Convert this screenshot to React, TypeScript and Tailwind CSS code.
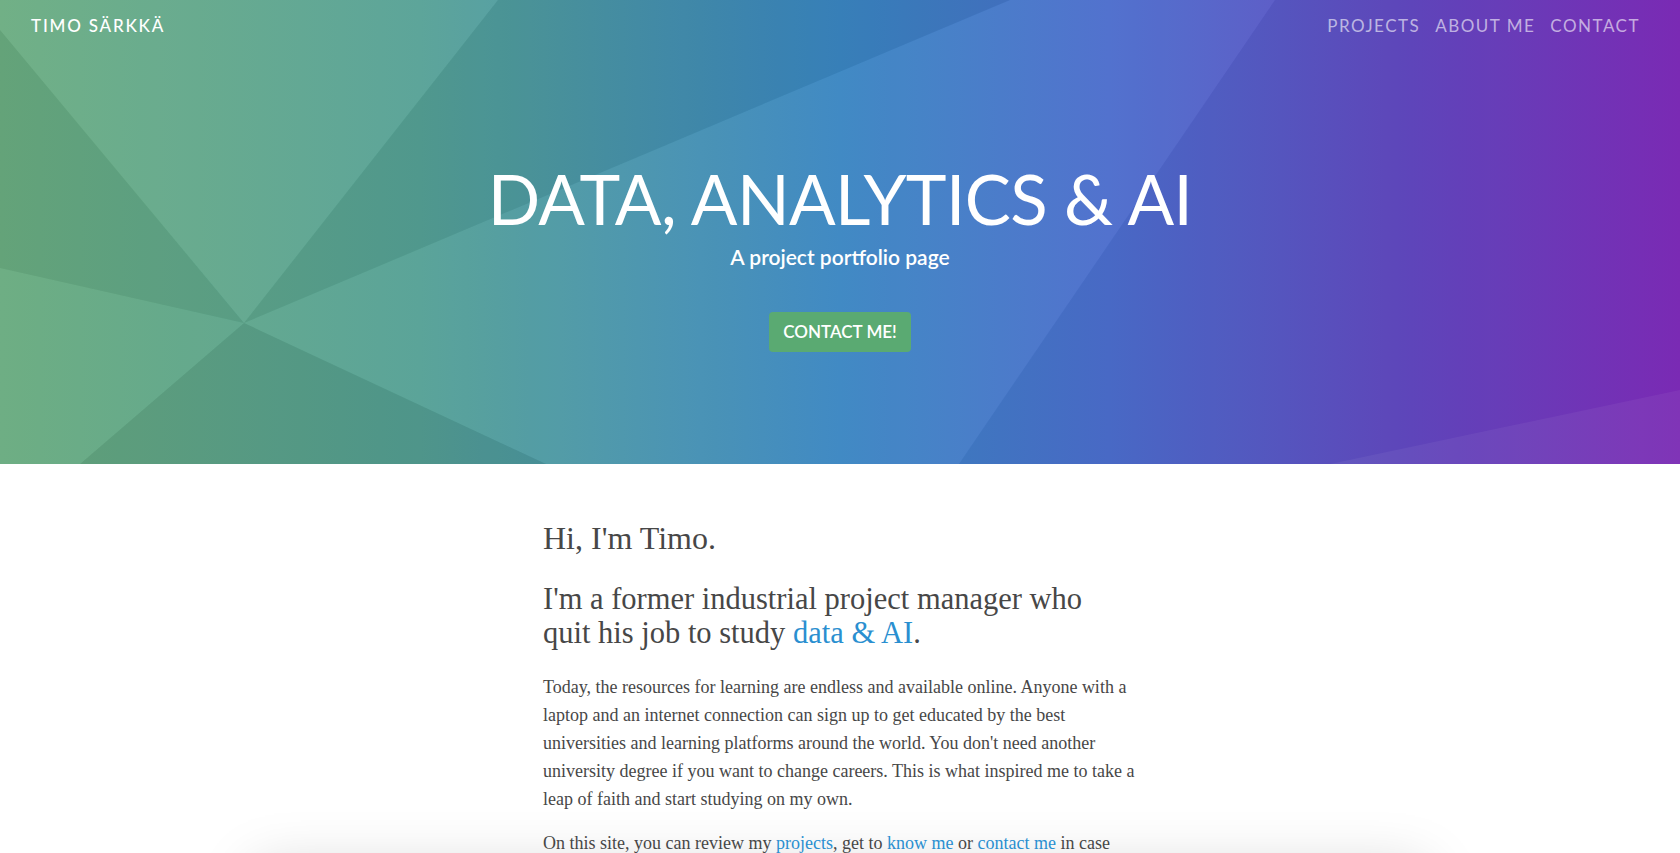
import React from "react";

const Facets = () => (
    <svg className="absolute inset-0 h-full w-full" viewBox="0 0 1680 464" preserveAspectRatio="none">
        {/* wedges around the focal point on the left */}
        <polygon points="0,30 244,323 0,268" fill="#000" fillOpacity="0.05" />
        <polygon points="0,0 498,0 244,323 0,30" fill="#fff" fillOpacity="0.05" />
        <polygon points="498,0 1010,0 244,323" fill="#000" fillOpacity="0.05" />
        <polygon points="244,323 1010,0 1275,0 959,464 546,464" fill="#fff" fillOpacity="0.04" />
        <polygon points="244,323 546,464 80,464" fill="#000" fillOpacity="0.07" />
        <polygon points="0,268 244,323 80,464 0,464" fill="#fff" fillOpacity="0.03" />
        <polygon points="1275,0 1680,0 1680,464 959,464" fill="#000" fillOpacity="0.03" />
        <polygon points="1330,464 1680,390 1680,464" fill="#fff" fillOpacity="0.05" />
    </svg>
);

const Hero = () => {
    return (
        <header className="relative h-[464px] overflow-hidden bg-[linear-gradient(90deg,#6aac80_0%,#55a195_25%,#3a86c2_50%,#4b6dcc_66%,#6248c0_84%,#7e2cba_100%)] font-['Lato',sans-serif] text-white">
            <Facets />

            {/* Nav */}
            <nav className="relative flex items-center justify-between pl-[31px] pr-[40px] pt-[13px]">
                <a href="#" className="text-[17px] font-medium tracking-[1.8px]">TIMO SÄRKKÄ</a>
                <div className="flex gap-[15px] text-[17px] tracking-[1.5px] text-white/60">
                    <a href="#">PROJECTS</a>
                    <a href="#">ABOUT ME</a>
                    <a href="#">CONTACT</a>
                </div>
            </nav>

            {/* Title */}
            <div className="relative flex flex-col items-center pt-[122px]">
                <h1 className="text-[69px] leading-[76px] font-normal tracking-[-0.6px]">DATA, ANALYTICS &amp; AI</h1>
                <p className="mt-[4px] text-[21px] font-semibold">A project portfolio page</p>
                <a href="#" className="mt-[40px] flex h-[40px] w-[142px] items-center justify-center rounded-[4px] bg-[#5aaa72] text-[17px] font-semibold">
                    CONTACT ME!
                </a>
            </div>
        </header>
    );
};

export default function App() {
    return (
        <div className="min-h-screen bg-white">
            <Hero />

            <main className="mx-auto w-[600px] pl-[3px] pt-[56px] font-['Liberation_Serif',serif] text-[#474747]">
                <h2 className="text-[32px] leading-[36px]">Hi, I'm Timo.</h2>

                <h3 className="mt-[26px] text-[30.5px] leading-[34px]">
                    I'm a former industrial project manager who<br />
                    quit his job to study <a href="#" className="text-[#2a8fd0]">data &amp; AI</a>.
                </h3>

                <p className="mt-[23px] text-[18px] leading-[28px]">
                    Today, the resources for learning are endless and available online. Anyone with a<br />
                    laptop and an internet connection can sign up to get educated by the best<br />
                    universities and learning platforms around the world. You don't need another<br />
                    university degree if you want to change careers. This is what inspired me to take a<br />
                    leap of faith and start studying on my own.
                </p>

                <p className="mt-[16px] text-[18px] leading-[28px]">
                    On this site, you can review my <a href="#" className="text-[#2a8fd0]">projects</a>, get to <a href="#" className="text-[#2a8fd0]">know me</a> or <a href="#" className="text-[#2a8fd0]">contact me</a> in case<br />
                    you want to talk about data, analytics or AI.
                </p>
            </main>

            {/* Projects card, below the fold */}
            <section className="mx-auto mb-[40px] mt-0 h-[420px] w-[1170px] bg-white shadow-[0_-16px_55px_rgba(0,0,0,0.18)]" />
        </div>
    );
}
